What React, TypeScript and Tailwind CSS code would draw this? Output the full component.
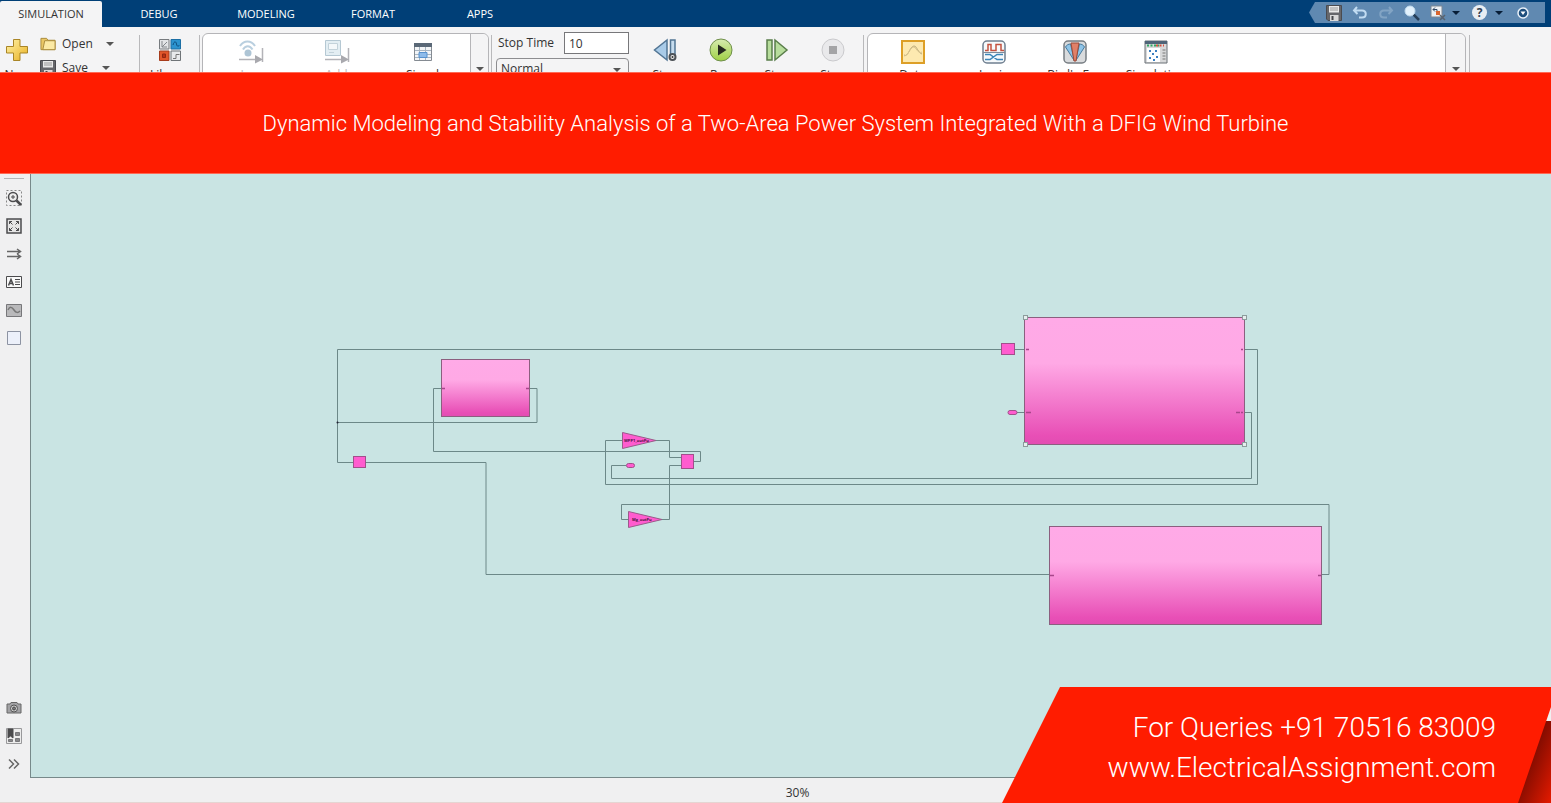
import type { ReactNode } from "react";

const tabs = ["SIMULATION", "DEBUG", "MODELING", "FORMAT", "APPS"];

function Caret({ className = "text-[#555]" }: { className?: string }) {
  return (
    <svg viewBox="0 0 8 4" className={`h-1 w-2 shrink-0 ${className}`}>
      <path d="M0 0h8L4 4z" fill="currentColor" />
    </svg>
  );
}

function FloppyIcon() {
  return (
    <svg viewBox="0 0 16 16" className="size-4 shrink-0">
      <path d="M.5.5h15v15H2L.5 14z" fill="#66676b" stroke="#4a4b50" />
      <path d="M3 1h10v6.500H3z" fill="#e9e9e9" />
      <path d="M4 3h8M4 5h8" stroke="#999" />
      <path d="M4 10h8.500v6H4z" fill="#d9d9d9" />
      <path d="M5.500 11h2v4h-2z" fill="#45464a" />
    </svg>
  );
}

function PlusIcon() {
  return (
    <svg viewBox="0 0 24 24" className="size-6">
      <defs>
        <linearGradient id="gold" x1="0" y1="0" x2="1" y2="1">
          <stop offset="0" stopColor="#fff3a8" />
          <stop offset="1" stopColor="#e9b021" />
        </linearGradient>
      </defs>
      <path d="M8.500 1.500h6.500v7h7.500V15H15v7.500H8.500V15H1.500V8.500h7z" fill="url(#gold)" stroke="#a98527" />
    </svg>
  );
}

function FolderIcon() {
  return (
    <svg viewBox="0 0 17 14" className="h-3.5 w-4 shrink-0">
      <path d="M1 1h6l1.500 2H16v10H1z" fill="#e9c766" stroke="#a8893b" />
      <path d="M5 3.500h11V13H3z" fill="#fbe9a4" stroke="#a8893b" />
    </svg>
  );
}

function LibraryIcon() {
  return (
    <svg viewBox="0 0 24 24" className="size-6" fill="none">
      <path d="M1.500 1.500h9.500v9.500H1.500z" fill="#e2e4e6" stroke="#777b7f" />
      <path d="M4 3v6l5-5M4 9h5" stroke="#83878b" />
      <path d="M13 1.500h9.500v9.500H13z" fill="#2c93cf" stroke="#1c6fa5" />
      <path d="M15 7c1-4 3-4 3.500-1s2 2.500 3 1" stroke="#0d4d7d" />
      <path d="M1.500 13h9.500v9.500H1.500z" fill="#e2562a" stroke="#a63c1c" />
      <path d="M4.500 16h3v3.500h-3z" fill="#bd2f13" stroke="#8f2811" />
      <path d="M13 13h9.500v9.500H13z" fill="#e8eaec" stroke="#6f7478" />
      <path d="M15 20.500h3v-4h3.500" stroke="#777" />
    </svg>
  );
}

function LogSignalIcon() {
  return (
    <svg viewBox="0 0 26 26" className="size-[26px]" fill="none">
      <path d="M2 7c4-6 11-6 15 0M5 10.500c2.500-4.500 7-4.500 9.500 0" stroke="#b9cfdf" strokeWidth="2" />
      <circle cx="10" cy="14" r="3.500" fill="#aec5d5" />
      <path d="M1 20.500h17M24.500 9v14" stroke="#b3b3b8" strokeWidth="1.500" />
      <path d="M17 16l8 4.500-8 4z" fill="#a9a9ae" />
    </svg>
  );
}

function AddViewerIcon() {
  return (
    <svg viewBox="0 0 26 26" className="size-[26px]" fill="none">
      <path d="M1.500 1.500h15v15h-15z" fill="#e3eef3" stroke="#b5c8d3" />
      <path d="M4.500 4.500h9v6h-9z" fill="#f4f8fa" stroke="#c3d2da" />
      <path d="M5 13.500h5" stroke="#c3d2da" />
      <path d="M1 20.500h17M24.500 9v14" stroke="#b3b3b8" strokeWidth="1.500" />
      <path d="M17 16l8 4.500-8 4z" fill="#a9a9ae" />
    </svg>
  );
}

function TableIcon() {
  return (
    <svg viewBox="0 0 20 20" className="size-5" fill="none">
      <path d="M1.500 1.500h17v17h-17z" fill="#f3f5f7" stroke="#858b92" />
      <path d="M1 1h18v4H1z" fill="#5a6877" />
      <path d="M6.500 5v13M12.500 5v13M2 8.500h16M2 12.500h16M2 15.500h16" stroke="#a7b5c2" />
      <path d="M6 10.500h8v5H6z" fill="#8dbbea" stroke="#5792cf" />
    </svg>
  );
}

function StepBackIcon() {
  return (
    <svg viewBox="0 0 24 24" className="size-6" fill="none">
      <path d="M14 2v20L1.500 12z" fill="#a9cbe8" stroke="#527594" strokeWidth="1.500" />
      <path d="M17.500 2h4.500v16h-4.500z" fill="#c6dcee" stroke="#527594" strokeWidth="1.500" />
      <circle cx="19.500" cy="19" r="3" fill="#eee" stroke="#4c5156" strokeWidth="2" />
      <circle cx="19.500" cy="19" r="1" fill="#333" />
    </svg>
  );
}

function RunIcon() {
  return (
    <svg viewBox="0 0 24 24" className="size-6">
      <defs>
        <linearGradient id="run" x1="0" y1="0" x2="0" y2="1">
          <stop offset="0" stopColor="#d7ecb0" />
          <stop offset="1" stopColor="#9fd044" />
        </linearGradient>
      </defs>
      <circle cx="12" cy="12" r="11" fill="url(#run)" stroke="#6f8f4b" />
      <path d="M9 6.500l8.500 5.500L9 17.500z" fill="#262a1f" />
    </svg>
  );
}

function StepForwardIcon() {
  return (
    <svg viewBox="0 0 24 24" className="size-6">
      <path d="M2 2h5v20H2zM10 2l12 10-12 10z" fill="#b7dd9c" stroke="#5a7e4b" strokeWidth="1.500" />
    </svg>
  );
}

function StopIcon() {
  return (
    <svg viewBox="0 0 24 24" className="size-6">
      <circle cx="12" cy="12" r="11" fill="#e9e9eb" stroke="#cacacd" />
      <path d="M8 8h8v8H8z" fill="#a4a4a6" />
    </svg>
  );
}

function InspectorIcon() {
  return (
    <svg viewBox="0 0 24 24" className="size-6" fill="none">
      <path d="M1 1h22v22H1z" fill="#fde9b0" stroke="#dd9f27" strokeWidth="2" />
      <path d="M3 15c4 3 6-9 10-9 3 0 4 7 8 8" stroke="#b9a878" />
      <path d="M3 16c5-1 5-7 9-9 3-1 5 8 9 5" stroke="#d9c48e" />
    </svg>
  );
}

function LogicIcon() {
  return (
    <svg viewBox="0 0 24 24" className="size-6" fill="none">
      <rect x="1" y="1" width="22" height="22" rx="4" fill="#f6f9fb" stroke="#6f7f90" strokeWidth="1.500" />
      <path d="M3 10.500h3v-6h3v6h5v-6h5v6h3" stroke="#c4523f" strokeWidth="1.500" />
      <path d="M1 12.500h22" stroke="#7b8a99" />
      <path d="M3 14.500h5l7 5h6M3 19.500h5l7-5h6" stroke="#3c86b9" strokeWidth="1.500" />
    </svg>
  );
}

function BirdsEyeIcon() {
  return (
    <svg viewBox="0 0 24 24" className="size-6">
      <rect x="1" y="1" width="22" height="22" rx="4" fill="#d9dbdd" stroke="#777d83" strokeWidth="1.500" />
      <path d="M2.500 7c1-2 3-3 5-3l4 17zM21.500 7c-1-2-3-3-5-3l-4 17z" fill="#8ec4e8" stroke="#467a9d" />
      <path d="M8 3h8l-3 18h-2z" fill="#e08068" stroke="#9c4a38" />
    </svg>
  );
}

function ManagerIcon() {
  return (
    <svg viewBox="0 0 24 24" className="size-6" fill="none">
      <path d="M1 1h22v22H1z" fill="#d8d9da" stroke="#6b7177" />
      <path d="M1 1h22v3H1z" fill="#4f6478" />
      <path d="M3 5.500h12" stroke="#2ea863" strokeWidth="2" strokeDasharray="2 1.500" />
      <path d="M12 5.500h8" stroke="#d5503c" strokeWidth="2" strokeDasharray="2 1.500" />
      <path d="M3 8h13v14H3z" fill="#fff" />
      <path d="M5 10h2v2H5zM11 10h2v2h-2zM8 13h2v2H8zM5 17h2v2H5zM12 16h2v2h-2zM9 19h2v2H9z" fill="#3b7fc0" />
      <path d="M18.500 10h3M18.500 13h3M18.500 16h3M18.500 19h3" stroke="#777" />
    </svg>
  );
}

function ToolButton({ icon, label, className }: { icon: ReactNode; label: string; className: string }) {
  return (
    <button className={`flex shrink-0 flex-col items-center text-[12px] leading-4 ${className}`}>
      <span className="flex h-[26px] items-center">{icon}</span>
      <span className="whitespace-nowrap">{label}</span>
    </button>
  );
}

function Divider() {
  return <div className="mt-2 h-20 w-px shrink-0 bg-[#b9b9bb]" />;
}

function MenuBar() {
  return (
    <header className="flex h-[27px] shrink-0 justify-between bg-[#003f77]">
      <nav className="flex gap-[7px] pt-px">
        {tabs.map((tab) => (
          <button
            key={tab}
            className={
              tab === "SIMULATION"
                ? "w-[102px] rounded-t-xs bg-[#f4f4f5] text-[11px] text-[#333]"
                : "w-[100px] text-[11px] text-white"
            }
          >
            {tab}
          </button>
        ))}
      </nav>
      <div className="mt-0.5 mr-1.5 flex h-[21px] w-[236px] items-center bg-[#6089b1] pl-[17px] text-white [clip-path:polygon(0_50%,6px_0,100%_0,100%_100%,6px_100%)]">
        <button aria-label="Save">
          <FloppyIcon />
        </button>
        <button aria-label="Undo" className="ml-2.5">
          <svg viewBox="0 0 16 14" className="h-3.5 w-4" fill="none">
            <path d="M5 1L2 4.500 5.500 8M2 4.500h8c5 0 5 7 0 7H7" stroke="#c2dcf2" strokeWidth="2" />
          </svg>
        </button>
        <button aria-label="Redo" className="ml-2.5">
          <svg viewBox="0 0 16 14" className="h-3.5 w-4" fill="none">
            <path d="M11 1l3 3.500L10.500 8M14 4.500H6c-5 0-5 7 0 7h3" stroke="#82a4c4" strokeWidth="2" />
          </svg>
        </button>
        <button aria-label="Search" className="ml-2.5">
          <svg viewBox="0 0 16 16" className="size-4" fill="none">
            <path d="M9 9l6 6" stroke="#263f5a" strokeWidth="2.500" />
            <circle cx="6" cy="6" r="5" fill="#e2f1fc" stroke="#c0dbef" />
          </svg>
        </button>
        <button aria-label="Favorites" className="ml-2.5 flex items-center gap-1.5">
          <svg viewBox="0 0 16 16" className="size-4" fill="none">
            <path d="M1 1h11v11H1z" fill="#edf0f3" stroke="#7c8793" />
            <path d="M3 4.500h4v3M5 2.500L3 4.500l2 2" stroke="#314a67" />
            <path d="M6 6h4v4H6z" fill="#d8652f" />
            <path d="M10 10l5 5M15 10l-5 5" stroke="#59636e" strokeWidth="1.500" />
          </svg>
          <Caret className="text-[#071d36]" />
        </button>
        <button aria-label="Help" className="ml-3 flex items-center gap-2">
          <span className="flex size-[15px] items-center justify-center rounded-full bg-[#e9eef3] text-[12px] leading-none font-bold text-[#344253]">?</span>
          <Caret className="text-[#071d36]" />
        </button>
        <button aria-label="More" className="ml-3.5">
          <svg viewBox="0 0 12 12" className="size-3">
            <circle cx="6" cy="6" r="5" fill="#1d4e7d" stroke="#e8f0f8" strokeWidth="1.500" />
            <path d="M3.500 4.500h5L6 8z" fill="#fff" />
          </svg>
        </button>
      </div>
    </header>
  );
}

function Toolstrip() {
  return (
    <section className="flex h-[45px] shrink-0 items-start overflow-hidden bg-[#f4f4f5] text-[12px] text-[#333]">
      <ToolButton icon={<PlusIcon />} label="New" className="w-[34px] gap-1 pt-2.5" />
      <div className="flex w-[105px] shrink-0 flex-col gap-2 pt-[9px] pl-1.5">
        <button className="flex h-4 items-center">
          <FolderIcon />
          <span className="w-[50px] pl-1.5 text-left">Open</span>
          <Caret />
        </button>
        <button className="flex h-4 items-center">
          <FloppyIcon />
          <span className="w-[46px] pl-1.5 text-left">Save</span>
          <Caret />
        </button>
      </div>
      <Divider />
      <ToolButton icon={<LibraryIcon />} label="Library" className="w-[59px] gap-1 pt-2.5" />
      <Divider />
      <div className="mx-0.5 mt-1.5 flex h-20 w-[287px] shrink-0 rounded-md border border-[#b5b5b8] bg-white">
        <div className="flex flex-1 justify-center pt-[5px]">
          <ToolButton icon={<LogSignalIcon />} label="Log" className="w-[86px] gap-0.5 text-[#bbb]" />
          <ToolButton icon={<AddViewerIcon />} label="Add" className="w-[86px] gap-0.5 text-[#bbb]" />
          <ToolButton icon={<TableIcon />} label="Signal" className="w-[86px] gap-0.5" />
        </div>
        <button aria-label="More prepare tools" className="flex w-[18px] justify-center rounded-r-md border-l border-[#b5b5b8] bg-[#f4f4f5] pt-[33px]">
          <Caret />
        </button>
      </div>
      <Divider />
      <div className="flex w-[137px] shrink-0 flex-col gap-1 pt-[5px] pl-1">
        <div className="flex items-center justify-between">
          <label htmlFor="stop-time" className="pl-0.5">
            Stop Time
          </label>
          <input id="stop-time" defaultValue="10" className="h-[22px] w-[65px] border border-[#77777a] bg-white px-1" />
        </div>
        <div className="relative">
          <select aria-label="Simulation mode" className="h-[22px] w-full appearance-none rounded-sm border border-[#8d8d90] bg-[#f4f4f5] px-1 leading-5">
            <option>Normal</option>
            <option>Accelerator</option>
          </select>
          <span className="pointer-events-none absolute top-2.5 right-2">
            <Caret />
          </span>
        </div>
      </div>
      <div className="flex w-[234px] shrink-0 pt-2.5 pl-2">
        <ToolButton icon={<StepBackIcon />} label="Step" className="w-14 gap-1" />
        <ToolButton icon={<RunIcon />} label="Run" className="w-14 gap-1" />
        <ToolButton icon={<StepForwardIcon />} label="Step" className="w-14 gap-1" />
        <ToolButton icon={<StopIcon />} label="Stop" className="w-14 gap-1" />
      </div>
      <Divider />
      <div className="mx-[3px] mt-1.5 flex h-20 max-w-[599px] flex-1 rounded-md border border-[#b5b5b8] bg-white">
        <div className="flex flex-1 pt-[5px] pl-1">
          <ToolButton icon={<InspectorIcon />} label="Data" className="w-[81px] gap-0.5" />
          <ToolButton icon={<LogicIcon />} label="Logic" className="w-[81px] gap-0.5" />
          <ToolButton icon={<BirdsEyeIcon />} label="Bird's-Eye" className="w-[81px] gap-0.5" />
          <ToolButton icon={<ManagerIcon />} label="Simulation" className="w-[81px] gap-0.5" />
        </div>
        <button aria-label="More result tools" className="flex w-5 justify-center rounded-r-md border-l border-[#b5b5b8] bg-[#f4f4f5] pt-[33px]">
          <Caret />
        </button>
      </div>
      <Divider />
    </section>
  );
}

function PaletteButton({ label, children }: { label: string; children: ReactNode }) {
  return (
    <button aria-label={label}>
      <svg viewBox="0 0 16 16" className="size-4" fill="none" stroke="#4b4b4d">
        {children}
      </svg>
    </button>
  );
}

function Palette() {
  return (
    <aside className="flex w-[31px] shrink-0 flex-col items-center justify-between border-r border-[#77898a] bg-[#f0f0f1] pt-1 pr-0.5 pb-1.5">
      <div className="flex flex-col items-center gap-3 border-t border-[#b5b5b7] px-0.5 pt-[11px]">
        <PaletteButton label="Zoom">
          <path d="M.5.500h15v15H.5z" strokeDasharray="2 2" stroke="#888" />
          <circle cx="7" cy="7" r="4.500" fill="#eee" strokeWidth="1.500" />
          <path d="M10.500 10.500l4.500 4.500" strokeWidth="2.500" />
          <path d="M5 7h4M7 5v4" />
        </PaletteButton>
        <PaletteButton label="Fit to view">
          <path d="M1 1h14v14H1z" fill="#e5e5e5" strokeWidth="1.500" />
          <path d="M3.500 6V3.500H6M3.500 3.500l3 3M10 3.500h2.500V6M12.500 3.500l-3 3M3.500 10v2.500H6M3.500 12.500l3-3M10 12.500h2.500V10M12.500 12.500l-3-3" />
        </PaletteButton>
        <PaletteButton label="Sample time">
          <path d="M1 5.500h13M11 3l3.500 2.500L11 8M1 10.500h13M11 8l3.500 2.500L11 13" stroke="#666" strokeWidth="1.500" />
        </PaletteButton>
        <PaletteButton label="Annotation">
          <path d="M.5 2.500h15v11H.5z" fill="#fafafa" />
          <path d="M2.500 11.500l2.500-6 2.500 6M3.500 9.500h3" strokeWidth="1.500" />
          <path d="M9 5.500h5M9 8h5M9 10.500h5" />
        </PaletteButton>
        <PaletteButton label="Image">
          <path d="M.5 2.500h15v12H.5z" fill="#b9b9bb" stroke="#77777a" />
          <path d="M2 8c2-4 4-3 6 0s4 3 6 1" stroke="#777" strokeWidth="1.500" />
        </PaletteButton>
        <PaletteButton label="Area">
          <path d="M1.500 1.500h13v13h-13z" fill="#ecf0fa" stroke="#8d93a2" />
        </PaletteButton>
      </div>
      <div className="flex flex-col gap-3">
        <PaletteButton label="Screenshot">
          <path d="M1 4h3l1-1.500h6L12 4h3v9H1z" fill="#a2a2a5" stroke="#666" />
          <circle cx="8" cy="8.500" r="3.500" fill="#ccc" stroke="#555" />
          <circle cx="8" cy="8.500" r="1.500" fill="#777" />
        </PaletteButton>
        <PaletteButton label="Model browser">
          <path d="M.5.500h15v15H.5z" fill="#ececec" stroke="#99999b" />
          <path d="M2 1h5v9L4.500 8 2 10z" fill="#4a4a4c" />
          <path d="M9.500 4.500h4v3h-4zM9.500 10.500h4v3h-4zM2.500 11.500h4v2h-4z" fill="#88888a" stroke="#77777a" />
        </PaletteButton>
        <PaletteButton label="Expand">
          <path d="M3 3.500L7.500 8 3 12.500M8 3.500l4.500 4.500L8 12.500" stroke="#666" strokeWidth="1.500" />
        </PaletteButton>
      </div>
    </aside>
  );
}

// Wires and blocks are in model coordinates, the viewBox picks the visible part.
const wires = [
  "M1001.500 349.500H337.500V462.500H353",
  "M366 462.500H486V574.500H1049",
  "M530 388.500H537V422.500H337.500",
  "M442 388.500H433.500V451.500H700.500V461.500H694",
  "M623 440.500H605.500V484.500H1257.500V349.500H1245",
  "M626 465.500H611.500V478.500H1251.500V412.500H1245",
  "M656 440.500H669.500V457.500H681",
  "M628 519.500H621.500V504.500H1329V574.500H1322",
  "M661 519.500H669.500V465.500H681",
  "M1014 349.500H1024",
  "M1017 412.500H1024",
];

const subsystems = [
  { x: 441.5, y: 359.5, w: 88, h: 57 },
  { x: 1024.5, y: 317.5, w: 220, h: 127 },
  { x: 1049.5, y: 526.5, w: 272, h: 98 },
];

const muxes = [
  { x: 353.5, y: 456.5, w: 12, h: 11 },
  { x: 1001.5, y: 343.5, w: 13, h: 11 },
  { x: 681.5, y: 454.5, w: 12, h: 14 },
];

const handles = [
  [1025, 317],
  [1244, 317],
  [1025, 444],
  [1244, 444],
];

function Model() {
  return (
    <svg viewBox="31 174 1520 603" preserveAspectRatio="xMinYMin slice" className="absolute inset-0 size-full" fill="none">
      <defs>
        <linearGradient id="block" x1="0" y1="0" x2="0" y2="1">
          <stop offset="0" stopColor="#ffaae7" />
          <stop offset="0.36" stopColor="#ffa9e5" />
          <stop offset="0.93" stopColor="#e84fb6" />
          <stop offset="1" stopColor="#e24db2" />
        </linearGradient>
      </defs>
      {wires.map((d) => (
        <path key={d} d={d} stroke="#6c8888" />
      ))}
      <circle cx="337.500" cy="422.500" r="1" fill="#223" />
      {subsystems.map((b) => (
        <rect key={b.x} x={b.x} y={b.y} width={b.w} height={b.h} fill="url(#block)" stroke="#8b5f7f" />
      ))}
      {muxes.map((b) => (
        <rect key={b.x} x={b.x} y={b.y} width={b.w} height={b.h} fill="#ff5ccf" stroke="#a14f8b" />
      ))}
      <path d="M622.500 432.500L656 440.500 622.500 448.500zM628.500 511.500L662 519.500 628.500 527.500z" fill="#ff5ccf" stroke="#9b5b8b" />
      <g fill="#4d1540" fontSize="4" fontWeight="bold">
        <text x="624" y="442">WPP1_outPu</text>
        <text x="632" y="521">Mg_outPu</text>
      </g>
      <rect x="626.500" y="463.500" width="8" height="4" rx="2" fill="#ff5ccf" stroke="#a14f8b" />
      <rect x="1008" y="410.500" width="9" height="4" rx="2" fill="#ff5ccf" stroke="#a14f8b" />
      <path d="M442 388.500h3M526 388.500h3M1026 349.500h3M1241 349.500h2M1026 412.500h5M1236 412.500h4M1241 412.500h2M1050 575.500h4M1318 575.500h3" stroke="#a8468b" strokeWidth="1.500" />
      {handles.map(([x, y]) => (
        <rect key={`${x}-${y}`} x={x - 1.5} y={y - 1.5} width="4" height="4" fill="#e6eeee" stroke="#8c9c9c" />
      ))}
    </svg>
  );
}

function ContactBanner() {
  return (
    <div className="absolute right-0 bottom-0 h-[116px] w-[549px]">
      <div className="absolute right-0 bottom-0 h-[96px] w-[34px] bg-[#f0f0f1]" />
      <div className="absolute right-0 bottom-0 h-[82px] w-[34px] bg-linear-to-br from-[#6d0900] from-30% to-[#e51a00]" />
      <div className="relative flex h-full flex-col items-end justify-center bg-[#ff1c00] pt-1.5 pr-[55px] font-['Roboto',sans-serif] text-[28px] leading-10 font-light whitespace-nowrap text-white [clip-path:polygon(58px_0,100%_0,100%_20px,516px_100%,0_100%)]">
        <p>For Queries +91 70516 83009</p>
        <a href="#">www.ElectricalAssignment.com</a>
      </div>
    </div>
  );
}

export default function App() {
  return (
    <div className="relative flex h-screen flex-col overflow-hidden bg-[#f0f0f1] font-['Open_Sans','Noto_Sans',sans-serif]">
      <MenuBar />
      <Toolstrip />
      <div className="flex h-[102px] shrink-0 items-center justify-center border-y border-[#ff6a55] bg-[#ff1c00] font-['Roboto',sans-serif] text-[22px] font-light text-white">
        <h1>Dynamic Modeling and Stability Analysis of a Two-Area Power System Integrated With a DFIG Wind Turbine</h1>
      </div>
      <div className="flex min-h-0 flex-1">
        <Palette />
        <main className="relative flex-1 border-b border-[#77898a] bg-[#c9e4e3]">
          <Model />
        </main>
      </div>
      <footer className="flex h-[25px] shrink-0 items-center justify-center border-b border-[#e5d5d2] pt-1.5 pl-11 text-[12px] text-[#333]">
        30%
      </footer>
      <ContactBanner />
    </div>
  );
}
